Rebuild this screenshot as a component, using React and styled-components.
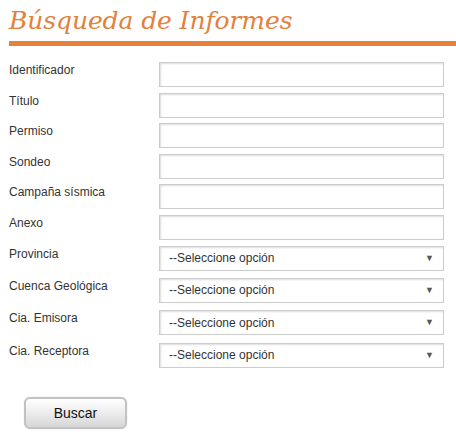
import React from "react";
import styled, { createGlobalStyle } from "styled-components";

const Global = createGlobalStyle`
  html, body { margin: 0; padding: 0; background: #ffffff; }
  body { font-family: "Liberation Sans", Arial, sans-serif; }
`;

const Page = styled.div`
  width: 456px;
  height: 440px;
  overflow: hidden;
  padding-left: 9px;
  box-sizing: border-box;
`;

const Title = styled.h1`
  margin: 0;
  padding-top: 4px;
  height: 37px;
  box-sizing: border-box;
  font-family: "DejaVu Serif", Georgia, serif;
  font-style: italic;
  font-weight: normal;
  font-size: 25px;
  line-height: 33px;
  color: #e2813b;
  letter-spacing: -0.1px;
`;

const Rule = styled.div`
  height: 5px;
  margin-top: 4px;
  background: #e5823a;
  margin-right: -10px;
`;

const Form = styled.form`
  display: flex;
  flex-direction: column;
  padding-top: 16px;
`;

const Row = styled.div`
  display: flex;
  align-items: flex-start;
  height: ${(p) => p.$h}px;
`;

const Label = styled.label`
  width: 150px;
  padding-top: 1px;
  font-size: 12px;
  line-height: 14px;
  color: #333333;
`;

const fieldBase = `
  box-sizing: border-box;
  width: 285px;
  height: 25px;
  border: 1px solid #cccccc;
  background: #ffffff;
  box-shadow: inset 1px 1px 2px #dcdcdc;
`;

const Input = styled.input`
  ${fieldBase}
  margin: 0;
  padding: 0 8px;
  font-family: "Liberation Sans", Arial, sans-serif;
  font-size: 12px;
  outline: none;
`;

const Select = styled.div`
  ${fieldBase}
  display: flex;
  align-items: center;
  justify-content: space-between;
  padding: 0 9px 0 9px;
  font-size: 12px;
  color: #333333;
`;

const Arrow = styled.span`
  font-size: 9px;
  color: #555555;
  line-height: 1;
`;

const ButtonRow = styled.div`
  padding-top: 22px;
  padding-left: 15px;
`;

const Button = styled.button`
  box-sizing: border-box;
  width: 103px;
  height: 32px;
  border: 2px solid #c2c2c2;
  border-radius: 6px;
  background: linear-gradient(to bottom, #ffffff 0%, #f0f0f0 40%, #d6d6d6 100%);
  box-shadow: inset 0 1px 0 #ffffff, 0 0 1px #bbbbbb;
  font-family: "Liberation Sans", Arial, sans-serif;
  font-size: 14px;
  color: #111111;
  padding: 0;
`;

const textFields = ["Identificador", "Título", "Permiso", "Sondeo", "Campaña sísmica", "Anexo"];
const selectFields = ["Provincia", "Cuenca Geológica", "Cia. Emisora", "Cia. Receptora"];

export default function App() {
  return (
    <Page>
      <Global />
      <Title>Búsqueda de Informes</Title>
      <Rule />
      <Form onSubmit={(e) => e.preventDefault()}>
        {textFields.map((f) => (
          <Row key={f} $h={30.6}>
            <Label>{f}</Label>
            <Input type="text" />
          </Row>
        ))}
        {selectFields.map((f) => (
          <Row key={f} $h={32.4}>
            <Label>{f}</Label>
            <Select>
              <span>--Seleccione opción</span>
              <Arrow>▼</Arrow>
            </Select>
          </Row>
        ))}
      </Form>
      <ButtonRow>
        <Button type="button">Buscar</Button>
      </ButtonRow>
    </Page>
  );
}
